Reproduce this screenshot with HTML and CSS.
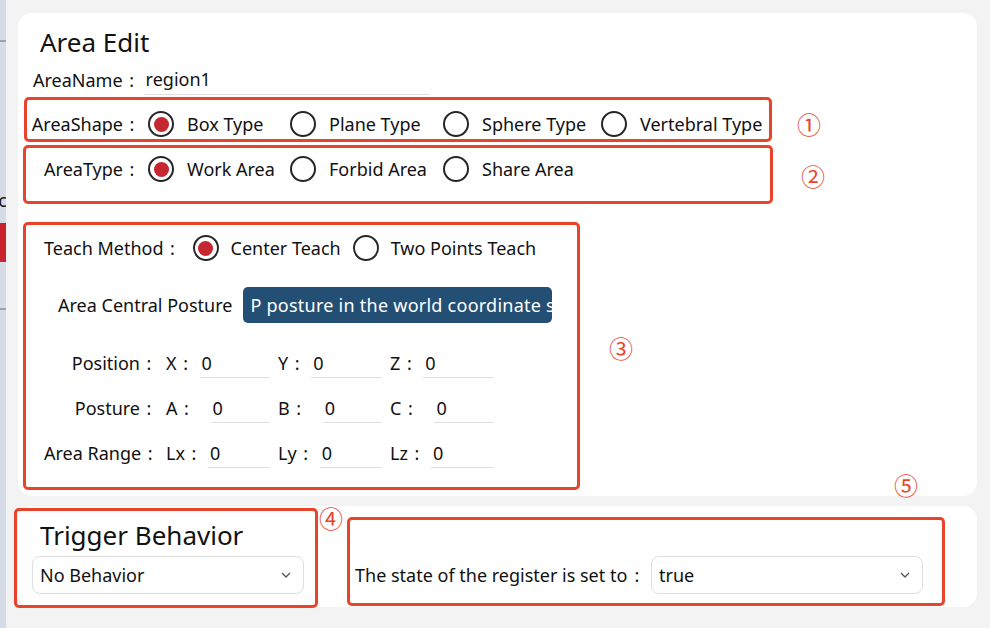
FILE: index.html
```html
<!DOCTYPE html>
<html>
<head>
    <title>Area Edit</title>
    <meta charset="utf-8">
    <link rel="stylesheet" href="styles.css">
</head>
<body>
    <div class="app">
        <!-- 侧边栏（被裁掉的一截） -->
        <aside class="sidebar">
            <div class="side-line"></div>
            <div class="side-text"><span>Logic</span></div>
            <div class="side-active"></div>
            <div class="side-line second"></div>
        </aside>

        <main class="content">
            <!-- 区域编辑 -->
            <section class="card edit-card">
                <h1 class="card-title">Area Edit</h1>

                <div class="name-row">
                    <span>AreaName<span class="colon">:</span></span>
                    <div class="text-input name-input">region1</div>
                </div>

                <div class="mark option-row shape-row">
                    <span class="row-label">AreaShape<span class="colon">:</span></span>
                    <div class="options">
                        <label class="option"><span class="radio checked"></span>Box Type</label>
                        <label class="option"><span class="radio"></span>Plane Type</label>
                        <label class="option"><span class="radio"></span>Sphere Type</label>
                        <label class="option"><span class="radio"></span>Vertebral Type</label>
                    </div>
                </div>

                <div class="mark option-row type-row">
                    <span class="row-label">AreaType<span class="colon">:</span></span>
                    <div class="options">
                        <label class="option"><span class="radio checked"></span>Work Area</label>
                        <label class="option"><span class="radio"></span>Forbid Area</label>
                        <label class="option"><span class="radio"></span>Share Area</label>
                    </div>
                </div>

                <div class="mark teach-box">
                    <div class="teach-row">
                        <span class="teach-label">Teach Method<span class="colon">:</span></span>
                        <label class="option spaced"><span class="radio checked"></span>Center Teach</label>
                        <label class="option spaced"><span class="radio"></span>Two Points Teach</label>
                    </div>

                    <div class="posture-row">
                        <span>Area Central Posture</span>
                        <div class="posture-btn">P posture in the world coordinate system</div>
                    </div>

                    <div class="field-row">
                        <span class="field-label">Position<span class="colon">:</span></span>
                        <div class="field"><span>X<span class="colon">:</span></span><div class="text-input">0</div></div>
                        <div class="field"><span>Y<span class="colon">:</span></span><div class="text-input">0</div></div>
                        <div class="field"><span>Z<span class="colon">:</span></span><div class="text-input">0</div></div>
                    </div>
                    <div class="field-row wide">
                        <span class="field-label">Posture<span class="colon">:</span></span>
                        <div class="field"><span>A<span class="colon">:</span></span><div class="text-input">0</div></div>
                        <div class="field"><span>B<span class="colon">:</span></span><div class="text-input">0</div></div>
                        <div class="field"><span>C<span class="colon">:</span></span><div class="text-input">0</div></div>
                    </div>
                    <div class="field-row">
                        <span class="field-label">Area Range<span class="colon">:</span></span>
                        <div class="field"><span>Lx<span class="colon">:</span></span><div class="text-input">0</div></div>
                        <div class="field"><span>Ly<span class="colon">:</span></span><div class="text-input">0</div></div>
                        <div class="field"><span>Lz<span class="colon">:</span></span><div class="text-input">0</div></div>
                    </div>
                </div>

                <span class="badge" style="left: 791px; top: 111px">①</span>
                <span class="badge" style="left: 795px; top: 163px">②</span>
                <span class="badge" style="left: 603px; top: 335px">③</span>
                <span class="badge" style="left: 888px; top: 472px">⑤</span>
            </section>

            <!-- 触发行为 -->
            <section class="card trigger-card">
                <div class="mark trigger-box">
                    <h1 class="card-title">Trigger Behavior</h1>
                    <div class="select behavior-select">
                        <span>No Behavior</span>
                        <svg width="10" height="6" viewBox="0 0 10 6"><path d="M1 1 L5 5 L9 1" fill="none" stroke="#555" stroke-width="1.3"/></svg>
                    </div>
                </div>
                <div class="mark register-box">
                    <span class="register-label">The state of the register is set to<span class="colon">:</span></span>
                    <div class="select register-select">
                        <span>true</span>
                        <svg width="10" height="6" viewBox="0 0 10 6"><path d="M1 1 L5 5 L9 1" fill="none" stroke="#555" stroke-width="1.3"/></svg>
                    </div>
                </div>
                <span class="badge" style="left: 313px; top: 12px">④</span>
            </section>
        </main>
    </div>
</body>
</html>
```

FILE: styles.css
```css
body, html {
    margin: 0;
    padding: 0;
    width: 100%;
    height: 100%;
    background: #f3f3f3;
    font-family: 'Noto Sans', 'Noto Sans CJK SC', sans-serif;
    font-size: 18px;
    color: #111;
}

.app {
    display: flex;
    height: 628px;
    overflow: hidden;
}

/* 侧边栏 */
.sidebar {
    width: 6px;
    flex-shrink: 0;
    background: #d5dbe7;
    padding-top: 40px;
    overflow: hidden;
}

.side-line {
    height: 2px;
    background: #a3a3a3;
}

.side-line.second {
    margin-top: 46px;
}

.side-text {
    margin-top: 148px;
    height: 20px;
    line-height: 20px;
    display: flex;
    justify-content: flex-end;
    white-space: nowrap;
}

.side-text span {
    margin-right: -1px;
}

.side-active {
    margin-top: 13px;
    height: 39px;
    background: #c8232f;
}

/* 主区域 */
.content {
    flex: 1;
    padding: 13px 13px 0 12px;
}

.card {
    position: relative;
    background: #fff;
    border-radius: 14px;
}

.edit-card {
    padding: 13px 0 6px 0;
}

.card-title {
    margin: 0;
    padding-left: 22px;
    font-size: 26px;
    font-weight: normal;
    line-height: 32px;
}

.mark {
    border: 3px solid #e9442b;
    border-radius: 5px;
    box-sizing: border-box;
}

.colon {
    display: inline-block;
    width: 18px;
    text-align: center;
}

.name-row {
    display: flex;
    align-items: center;
    margin-top: 7px;
    padding-left: 15px;
}

.text-input {
    height: 29px;
    line-height: 29px;
    padding-left: 2px;
    border-bottom: 1px solid #e0e0e0;
}

.name-input {
    width: 284px;
    margin-left: 3px;
}

/* 单选行 */
.option-row {
    display: flex;
    align-items: flex-start;
    line-height: 26px;
}

.shape-row {
    width: 748px;
    height: 45px;
    margin: 2px 0 0 6px;
    padding-top: 11px;
}

.type-row {
    width: 750px;
    height: 59px;
    margin: 3px 0 0 5px;
    padding-top: 8px;
}

.row-label {
    width: 114px;
    margin-right: 7px;
    text-align: right;
    white-space: nowrap;
}

.type-row .row-label {
    width: 115px;
}

.options {
    display: grid;
    grid-template-columns: 142px 153px 158px auto;
}

.option {
    display: flex;
    align-items: center;
    gap: 13px;
    white-space: nowrap;
    line-height: 26px;
}

.option.spaced {
    gap: 12px;
    margin-right: 12px;
}

.radio {
    width: 26px;
    height: 26px;
    box-sizing: border-box;
    border: 2.5px solid #262626;
    border-radius: 50%;
    display: flex;
    align-items: center;
    justify-content: center;
    flex-shrink: 0;
}

.radio.checked::after {
    content: '';
    width: 15px;
    height: 15px;
    border-radius: 50%;
    background: #c62630;
}

/* 示教区 */
.teach-box {
    width: 557px;
    margin: 18px 0 0 5px;
    padding: 9px 0 19px 18px;
}

.teach-row {
    display: flex;
    align-items: center;
    height: 26px;
    padding-top: 1px;
    margin-bottom: -1px;
}

.teach-label {
    margin-right: 11px;
    white-space: nowrap;
}

.posture-row {
    display: flex;
    align-items: center;
    margin-top: 27px;
    padding-left: 14px;
}

.posture-btn {
    width: 302px;
    height: 36px;
    line-height: 36px;
    margin-left: 11px;
    padding-left: 7px;
    background: #244f75;
    color: #fff;
    border-radius: 5px;
    white-space: nowrap;
    overflow: hidden;
    letter-spacing: 0.25px;
}

.field-row {
    display: flex;
    gap: 8px;
    margin-top: 15px;
    line-height: 29px;
    white-space: nowrap;
}

.field-row > * {
    padding-top: 1px;
}

.field-row .text-input {
    height: 28px;
}

.posture-row + .field-row {
    margin-top: 25px;
}

.field-label {
    width: 114px;
    text-align: right;
}

.field {
    display: flex;
    width: 104px;
}

.field .text-input {
    flex: 1;
    margin-left: 5px;
}

.field-row.wide .text-input {
    margin-left: 15px;
}

/* 触发行为 */
.trigger-card {
    margin-top: 10px;
    height: 101px;
    display: flex;
    align-items: flex-start;
}

.trigger-box {
    width: 304px;
    height: 100px;
    margin: 2px 0 0 -4px;
    padding-top: 8px;
}

.trigger-box .card-title {
    padding-left: 23px;
}

.select {
    height: 38px;
    box-sizing: border-box;
    border: 1.5px solid #dedede;
    border-radius: 8px;
    display: flex;
    align-items: center;
    justify-content: space-between;
    padding: 0 12px 0 7px;
}

.behavior-select {
    width: 272px;
    margin: 5px 0 0 15px;
}

.register-box {
    width: 598px;
    height: 89px;
    margin: 11px 0 0 29px;
    padding: 36px 0 0 5px;
    display: flex;
    align-items: flex-start;
}

.register-label {
    display: flex;
    width: 291px;
    margin-right: 5px;
    line-height: 38px;
    white-space: nowrap;
}

.register-label .colon {
    margin-left: auto;
}

.register-select {
    width: 272px;
}

.badge {
    position: absolute;
    transform: translate(-50%, -50%);
    font-family: 'Noto Sans CJK SC', 'DejaVu Sans', sans-serif;
    font-size: 24px;
    line-height: 1;
    color: #e9442b;
}
```
